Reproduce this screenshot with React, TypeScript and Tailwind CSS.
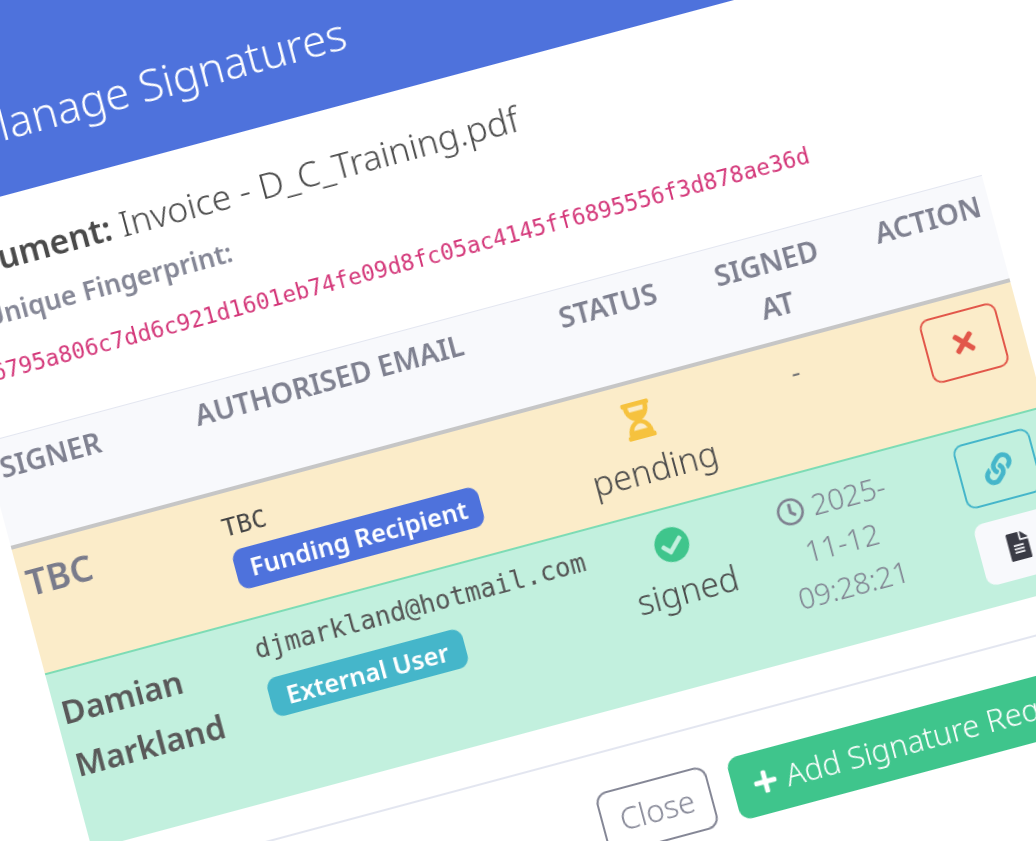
import React from "react";
import { FaHourglassHalf, FaCheckCircle, FaTimes, FaLink, FaFileAlt, FaPlus, FaRegClock } from "react-icons/fa";

const sans = "font-['Noto_Sans','Lato',sans-serif]";
const mono = "font-['DejaVu_Sans_Mono','Liberation_Mono',monospace]";

export default function App() {
  return (
    <div className="relative h-[841px] w-[1036px] overflow-hidden bg-white">
      <div className={`absolute left-0 top-0 w-[1092px] origin-top-left bg-white [transform:rotate(-15deg)_translate(-160px,-120px)] blur-[0.4px] ${sans}`}>
        <div className="flex h-[310px] items-end bg-[#4e72dc] pb-[40px] pl-[98px]">
          <h1 className="whitespace-nowrap text-[44px] font-light leading-[60px] text-white">Manage Signatures</h1>
        </div>

        <div className="px-[29px]">
          <p className="mt-[32px] whitespace-nowrap text-[35.4px] font-light leading-[50px] text-[#4a4a4a]">
            <b className="text-[33.5px] font-semibold">Document:</b> Invoice - D_C_Training.pdf
          </p>
          <p className="mt-[12px] pl-[34px] text-[26.8px] font-semibold leading-[36px] text-[#858796]">Unique Fingerprint:</p>
          <p className={`mt-[23px] whitespace-nowrap text-[22.65px] leading-[30px] text-[#d4387a] ${mono}`}>
            a36795a806c7dd6c921d1601eb74fe09d8fc05ac4145ff6895556f3d878ae36d
          </p>

          <table className="mt-[49px] w-[1034px] table-fixed border-collapse">
            <colgroup>
              <col className="w-[200px]" />
              <col className="w-[369px]" />
              <col className="w-[140px]" />
              <col className="w-[188px]" />
              <col className="w-[137px]" />
            </colgroup>
            <thead>
              <tr className="h-[108px] border-y border-b-[4px] border-t-[#e3e6f0] border-b-[#c6c6c6] bg-[#f8f9fc] align-top text-[28.5px] font-semibold uppercase leading-[44px] text-[#7f8190]">
                <th className="pl-[10px] pt-[6px] text-left font-semibold">Signer</th>
                <th className="pl-[12px] pt-[6px] text-left font-semibold">Authorised Email</th>
                <th className="pt-[6px] text-center font-semibold">Status</th>
                <th className="pt-[6px] text-center font-semibold">Signed<br />At</th>
                <th className="pl-[19px] pt-[6px] text-left font-semibold">Action</th>
              </tr>
            </thead>
            <tbody>
              <tr className="h-[131px] border-b-2 border-b-[#7ddcb5] bg-[#fbecc9] align-top">
                <td className="pl-[6px] pt-[10px] text-[36px] font-semibold leading-[54px] text-[#797b8b]">TBC</td>
                <td className="pl-[9px] pt-[17px]">
                  <div className={`text-[25px] leading-[36px] text-[#444] ${mono}`}>TBC</div>
                  <span className="ml-[2px] mt-[5px] inline-block rounded-[11px] bg-[#4e72dc] px-[15px] text-[25.5px] font-semibold leading-[41px] text-white">Funding Recipient</span>
                </td>
                <td className="pt-[18px] text-center">
                  <FaHourglassHalf className="mx-auto h-[38px] w-[30px] text-[#f6c23e]" />
                  <div className="mt-[8px] pl-[7px] text-[34px] font-light leading-[48px] text-[#4a4a4a]">pending</div>
                </td>
                <td className="pt-[8px] text-center text-[28px] leading-[44px] text-[#777]">-</td>
                <td className="pl-[37px] pt-[14px]">
                  <button className="flex h-[66px] w-[79px] items-center justify-center rounded-[10px] border-2 border-[#e2574a]">
                    <FaTimes className="h-[29px] w-[29px] text-[#e2574a]" />
                  </button>
                </td>
              </tr>
              <tr className="h-[181px] bg-[#c2f0de] align-top">
                <td className="pl-[6px] pt-[14px] text-[33px] font-semibold leading-[54px] text-[#595959]">Damian<br />Markland</td>
                <td className="pl-[9px] pt-[12px]">
                  <div className={`text-[25.8px] leading-[36px] text-[#555] ${mono}`}>djmarkland@hotmail.com</div>
                  <span className="ml-[2px] mt-[13px] inline-block rounded-[11px] bg-[#45b6ca] px-[17px] text-[25.5px] font-semibold leading-[40px] text-white">External User</span>
                </td>
                <td className="pt-[18px] text-center">
                  <FaCheckCircle className="mx-auto h-[36px] w-[36px] text-[#3fc58c]" />
                  <div className="mt-[6px] pl-[7px] text-[34px] font-light leading-[48px] text-[#4a4a4a]">signed</div>
                </td>
                <td className="pl-[2px] pt-[12px] text-center text-[29px] font-light leading-[44px] text-[#7f8190]">
                  <FaRegClock className="mr-[8px] inline h-[28px] w-[28px] align-[-4px]" />2025-<br />11-12<br />09:28:21
                </td>
                <td className="pl-[37px] pt-[14px]">
                  <button className="flex h-[66px] w-[79px] items-center justify-center rounded-[10px] border-2 border-[#45b6ca]">
                    <FaLink className="h-[30px] w-[30px] text-[#45b6ca]" />
                  </button>
                  <button className="mt-[16px] flex h-[63px] w-[79px] items-center justify-center rounded-[10px] bg-[#f8f9fc]">
                    <FaFileAlt className="h-[28px] w-[24px] text-[#3a3b45]" />
                  </button>
                </td>
              </tr>
            </tbody>
          </table>
        </div>

        <div className="mt-[37px] flex justify-end gap-[22px] border-t-2 border-t-[#e3e6f0] pb-[100px] pl-[29px] pr-[31px] pt-[38px]">
          <button className="h-[64px] rounded-[12px] border-2 border-[#858796] px-[17px] text-[31px] font-light text-[#858796]">Close</button>
          <button className="flex h-[64px] items-center gap-[8px] rounded-[12px] bg-[#3fc58c] px-[20px] text-[31px] font-light text-white">
            <FaPlus className="h-[26px] w-[26px]" />Add Signature Request
          </button>
        </div>
      </div>
    </div>
  );
}
